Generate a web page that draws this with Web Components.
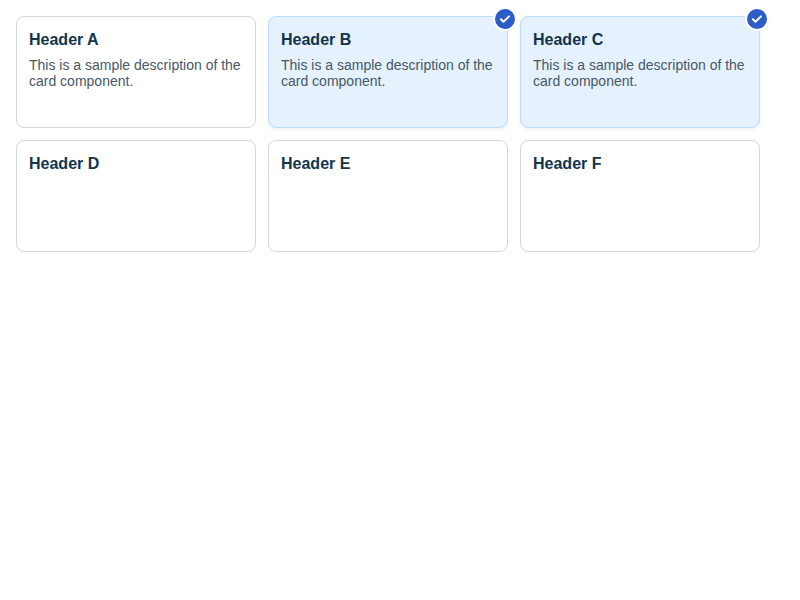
<!DOCTYPE html>
<html lang="en"><head><meta charset="utf-8"><title>Cards</title>
<style>body{margin:0;background:#fff;font-family:"Liberation Sans",Arial,sans-serif}</style></head>
<body>
<card-grid>
<select-card heading="Header A">This is a sample description of the card component.</select-card>
<select-card heading="Header B" selected>This is a sample description of the card component.</select-card>
<select-card heading="Header C" selected>This is a sample description of the card component.</select-card>
<select-card heading="Header D"></select-card>
<select-card heading="Header E"></select-card>
<select-card heading="Header F"></select-card>
</card-grid>
<script>
customElements.define('card-grid', class extends HTMLElement {
  constructor() {
    super();
    this.attachShadow({mode: 'open'}).innerHTML = `
      <style>:host{display:grid;grid-template-columns:repeat(3,240px);grid-auto-rows:112px;gap:12px;padding:16px}</style>
      <slot></slot>`;
  }
});
customElements.define('check-badge', class extends HTMLElement {
  constructor() {
    super();
    this.attachShadow({mode: 'open'}).innerHTML = `
      <style>:host{display:block;width:24px;height:24px}svg{display:block}</style>
      <svg width="24" height="24" viewBox="0 0 24 24" fill="none">
        <circle cx="12" cy="12" r="12" fill="#fff"/><circle cx="12" cy="12" r="10" fill="#2c5cc5"/>
        <path d="M7.9 12.2l2.6 2.6L16 9.4" stroke="#fff" stroke-width="2" stroke-linecap="round" stroke-linejoin="round"/>
      </svg>`;
  }
});
customElements.define('select-card', class extends HTMLElement {
  connectedCallback() {
    if (this.shadowRoot) return;
    this.attachShadow({mode: 'open'}).innerHTML = `
      <style>
        :host{display:block;box-sizing:border-box;position:relative;border:1px solid #cfd7df;border-radius:8px;padding:12px;background:#fff}
        :host([selected]){background:#e5f2fd;border-color:#bbdcfe;box-shadow:0 2px 4px rgba(18,52,77,.06)}
        h3{margin:2px 0 8px;font-size:16px;line-height:18px;font-weight:700;color:#12344d}
        p{margin:0;font-size:14px;line-height:16px;color:#475867}
        check-badge{position:absolute;top:-10px;right:-10px}
      </style>
      <h3></h3><p><slot></slot></p>${this.hasAttribute('selected') ? '<check-badge></check-badge>' : ''}`;
    this.shadowRoot.querySelector('h3').textContent = this.getAttribute('heading');
  }
});
</script></body></html>
